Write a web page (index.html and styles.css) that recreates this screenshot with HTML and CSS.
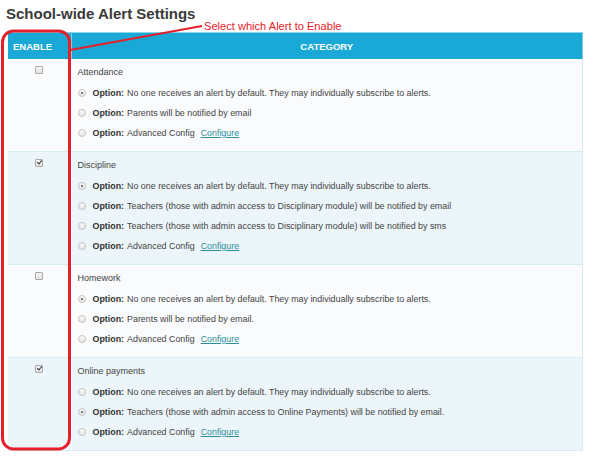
FILE: index.html
```html
<!DOCTYPE html>
<html>
<head>
<meta charset="utf-8">
<link rel="stylesheet" href="styles.css">
</head>
<body>
<div class="page">
  <h1 class="title">School-wide Alert Settings</h1>
  <table class="alerts">
    <thead>
      <tr><th class="col-enable">ENABLE</th><th class="col-cat">CATEGORY</th></tr>
    </thead>
    <tbody>
      <tr class="row">
        <td class="enable"><span class="check"></span></td>
        <td class="cat">
          <div class="cat-name">Attendance</div>
          <div class="opt"><span class="radio on"></span><b>Option:</b> No one receives an alert by default. They may individually subscribe to alerts.</div>
          <div class="opt"><span class="radio"></span><b>Option:</b> Parents will be notified by email</div>
          <div class="opt"><span class="radio"></span><b>Option:</b> Advanced Config <a class="cfg">Configure</a></div>
        </td>
      </tr>
      <tr class="row alt">
        <td class="enable"><span class="check on"></span></td>
        <td class="cat">
          <div class="cat-name">Discipline</div>
          <div class="opt"><span class="radio on"></span><b>Option:</b> No one receives an alert by default. They may individually subscribe to alerts.</div>
          <div class="opt"><span class="radio"></span><b>Option:</b> Teachers (those with admin access to Disciplinary module) will be notified by email</div>
          <div class="opt"><span class="radio"></span><b>Option:</b> Teachers (those with admin access to Disciplinary module) will be notified by sms</div>
          <div class="opt"><span class="radio"></span><b>Option:</b> Advanced Config <a class="cfg">Configure</a></div>
        </td>
      </tr>
      <tr class="row">
        <td class="enable"><span class="check"></span></td>
        <td class="cat">
          <div class="cat-name">Homework</div>
          <div class="opt"><span class="radio on"></span><b>Option:</b> No one receives an alert by default. They may individually subscribe to alerts.</div>
          <div class="opt"><span class="radio"></span><b>Option:</b> Parents will be notified by email.</div>
          <div class="opt"><span class="radio"></span><b>Option:</b> Advanced Config <a class="cfg">Configure</a></div>
        </td>
      </tr>
      <tr class="row alt">
        <td class="enable"><span class="check on"></span></td>
        <td class="cat">
          <div class="cat-name">Online payments</div>
          <div class="opt"><span class="radio"></span><b>Option:</b> No one receives an alert by default. They may individually subscribe to alerts.</div>
          <div class="opt"><span class="radio on"></span><b>Option:</b> Teachers (those with admin access to Online Payments) will be notified by email.</div>
          <div class="opt"><span class="radio"></span><b>Option:</b> Advanced Config <a class="cfg">Configure</a></div>
        </td>
      </tr>
    </tbody>
  </table>

  <!-- callout around the enable column -->
  <svg class="callout" width="600" height="464" viewBox="0 0 600 464">
    <rect x="2.5" y="31" width="67" height="418" rx="11" ry="11" fill="none" stroke="#e5202a" stroke-width="3"/>
    <line x1="70" y1="50" x2="202" y2="26" stroke="#e5202a" stroke-width="2"/>
  </svg>
  <span class="callout-text">Select which Alert to Enable</span>
</div>
</body>
</html>
```
FILE: styles.css
```css
html, body {
  margin: 0;
  padding: 0;
  background: #fff;
}

.page {
  position: relative;
  width: 600px;
  height: 464px;
  padding: 0 17px 0 8px;
  box-sizing: border-box;
  font-family: "Liberation Sans", Arial, sans-serif;
  color: #444;
}

.title {
  margin: 0 0 0 -2px;
  padding-top: 5px;
  height: 28px;
  box-sizing: border-box;
  font-size: 15px;
  line-height: 18px;
  font-weight: bold;
  color: #3a3a3a;
}

.alerts {
  width: 575px;
  border-collapse: collapse;
  border-top: 1px solid #8fd3ea;
  margin-top: 4px;
}

.alerts th {
  background: #1aa9d6;
  color: #fff;
  font-size: 9.5px;
  font-weight: bold;
  height: 26px;
  padding: 0;
  text-align: center;
  border-right: 1px solid #7ccde6;
}

.alerts th.col-enable {
  width: 63px;
  text-align: left;
  padding-left: 5px;
  box-sizing: border-box;
}

.row td {
  background: #f9fbfd;
  border-bottom: 1px solid #d8eaf2;
  vertical-align: top;
  padding: 0;
}

.row.alt td {
  background: #ecf5f9;
}

.row td.cat {
  border-right: 1px solid #d8eaf2;
  padding: 6px 0 8px 6px;
}

.row td.enable {
  padding-top: 7px;
  border-right: 1px solid #fff;
}

.cat-name {
  font-size: 9px;
  line-height: 14px;
  color: #444;
  margin-bottom: 4px;
}

.opt {
  font-size: 8.9px;
  line-height: 20px;
  height: 20px;
  color: #444;
  display: flex;
  align-items: center;
  white-space: nowrap;
}

.opt b {
  color: #333;
  margin-right: 3px;
}

.radio {
  width: 6px;
  height: 6px;
  border: 1px solid #c4c4c4;
  border-radius: 50%;
  background: linear-gradient(#fafafa, #e6e6e6);
  margin-right: 7px;
  position: relative;
  flex: none;
}

.radio.on::after {
  content: "";
  position: absolute;
  left: 2px;
  top: 2px;
  width: 2px;
  height: 2px;
  border-radius: 50%;
  background: #555;
}

.check {
  display: block;
  margin: 0 0 0 27px;
  width: 6px;
  height: 6px;
  border: 1px solid #aaa;
  border-radius: 1px;
  background: linear-gradient(#f6f6f6, #e2e2e2);
  position: relative;
}

.check.on::after {
  content: "";
  position: absolute;
  left: 2px;
  top: -1px;
  width: 1.5px;
  height: 4px;
  border: solid #333;
  border-width: 0 1.2px 1.2px 0;
  transform: rotate(40deg);
}

.cfg {
  color: #2a8e9c;
  text-decoration: underline;
  margin-left: 6px;
}

.callout {
  position: absolute;
  left: 0;
  top: 0;
  pointer-events: none;
}

.callout-text {
  position: absolute;
  left: 204px;
  top: 19px;
  font-size: 11.1px;
  line-height: 14px;
  color: #e5202a;
}
```
